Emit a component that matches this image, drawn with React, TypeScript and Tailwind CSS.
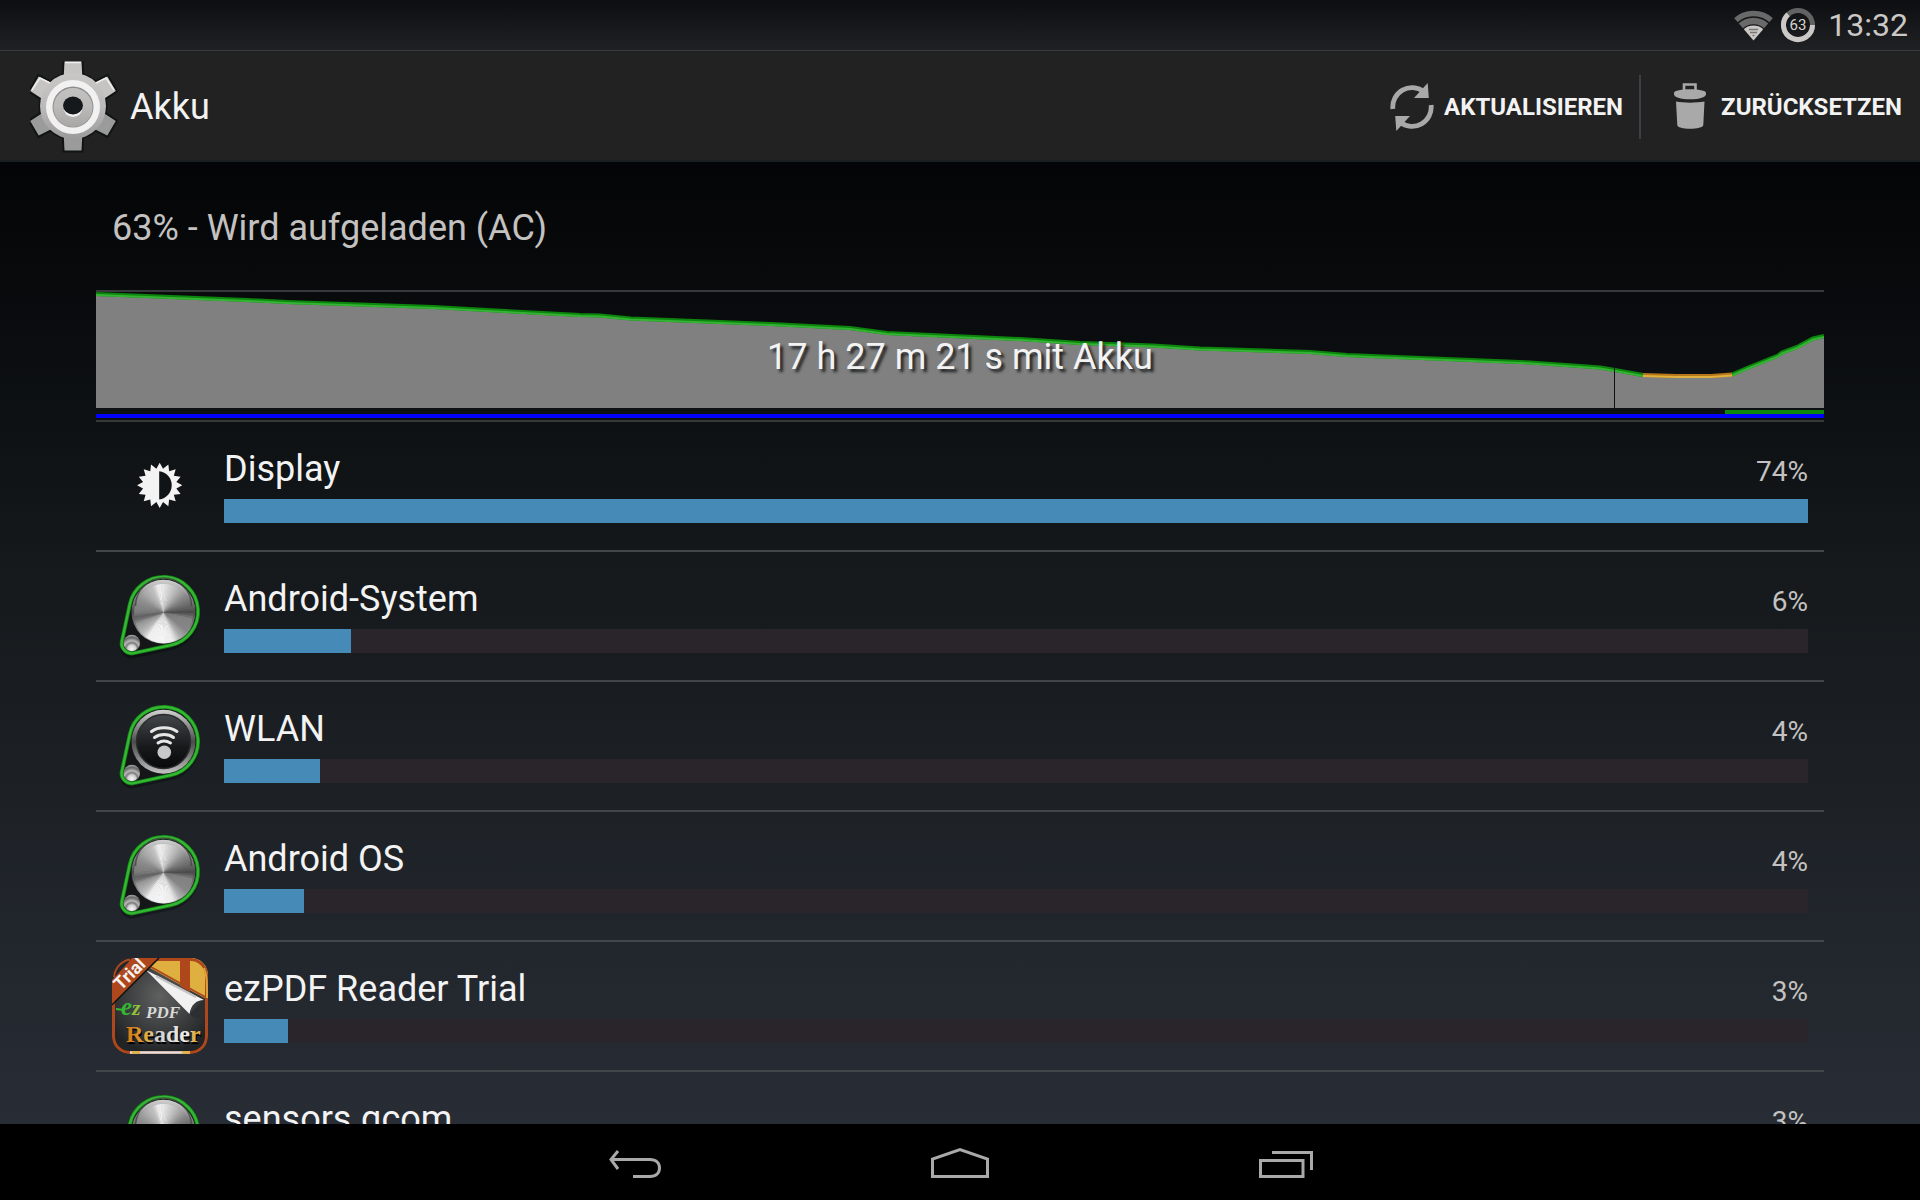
import { useState } from "react";

type IconKind = "display" | "knob" | "wifi" | "ezpdf";

interface Usage {
  name: string;
  percent: number;
  bar: number; // share of the track, in percent
  icon: IconKind;
}

const USAGE: Usage[] = [
  { name: "Display", percent: 74, bar: 100, icon: "display" },
  { name: "Android-System", percent: 6, bar: 8.02, icon: "knob" },
  { name: "WLAN", percent: 4, bar: 6.06, icon: "wifi" },
  { name: "Android OS", percent: 4, bar: 5.05, icon: "knob" },
  { name: "ezPDF Reader Trial", percent: 3, bar: 4.04, icon: "ezpdf" },
  { name: "sensors.qcom", percent: 3, bar: 3.6, icon: "knob" },
];

const polar = (cx: number, cy: number, r: number, deg: number) => {
  const a = (deg * Math.PI) / 180;
  return `${(cx + r * Math.cos(a)).toFixed(2)} ${(cy + r * Math.sin(a)).toFixed(2)}`;
};

// brushed metal: [angle clockwise from the top, grey value]
const METAL: [number, number][] = [
  [0, 225], [25, 185], [50, 135], [75, 95], [85, 75], [100, 130], [125, 135], [143, 175],
  [158, 235], [180, 245], [210, 240], [222, 190], [245, 150], [258, 95], [272, 125], [295, 140],
  [320, 175], [335, 195], [347, 240], [360, 225],
];

const metalAt = (deg: number) => {
  const i = METAL.findIndex(([a]) => a > deg);
  const [a0, v0] = METAL[i - 1];
  const [a1, v1] = METAL[i];
  return Math.round(v0 + ((v1 - v0) * (deg - a0)) / (a1 - a0));
};

const WEDGES = Array.from({ length: 72 }, (_, i) => i * 5);

function SettingsIcon() {
  return (
    <svg width="88" height="92" viewBox="0 0 88 92" aria-hidden="true">
      <defs>
        <linearGradient id="gear" x1="0" y1="0" x2="0" y2="92" gradientUnits="userSpaceOnUse">
          <stop offset="0" stopColor="#cfcdcb" />
          <stop offset="0.5" stopColor="#bcbab9" />
          <stop offset="1" stopColor="#8d8c8c" />
        </linearGradient>
      </defs>
      {[0, 60, 120, 180, 240, 300].map((a) => (
        <path key={a} d="M33 20 L34 0 H52 L53 20 Z" fill="#111415" stroke="#111415" strokeWidth="3" transform={`rotate(${a} 43 45)`} />
      ))}
      <circle cx="43" cy="45" r="34.5" fill="#111415" />
      {[60, 120, 180, 240, 300, 0].map((a) => (
        <path key={a} d="M33.5 20 L34.5 0.5 H51.5 L52.5 20 Z" fill={a > 90 && a < 270 ? "#9c9b9b" : "#c6c4c2"} transform={`rotate(${a} 43 45)`} />
      ))}
      <circle cx="43" cy="45" r="33" fill="url(#gear)" />
      <path d="M35 1.5 H51 M2 29 L10 17 L20 22 M66 22 L76 17 L84 29" stroke="#eeeeee" strokeWidth="1.5" fill="none" />
      <circle cx="43" cy="46" r="27" fill="#f1f1f1" />
      <circle cx="43" cy="46" r="20.5" fill="#8f8e8e" />
      <circle cx="43" cy="46.5" r="19.5" fill="url(#gear)" />
      <circle cx="43" cy="46.5" r="9.5" fill="#f1f1f1" />
      <ellipse cx="43" cy="44.5" rx="10" ry="9" fill="#16191b" />
    </svg>
  );
}

function WifiStatusIcon() {
  return (
    <svg width="41" height="31" viewBox="0 0 41 31" aria-hidden="true">
      <clipPath id="fan">
        <path d="M20.5 30.5 L-4 2 V-10 H45 V2 Z" />
      </clipPath>
      <g clipPath="url(#fan)" fill="none">
        <circle cx="20.5" cy="30.5" r="27" stroke="#696969" strokeWidth="5.5" />
        <circle cx="20.5" cy="30.5" r="19.5" stroke="#696969" strokeWidth="6.5" />
        <circle cx="20.5" cy="30.5" r="15" fill="#cbc8c6" />
        <path d="M16 19.5 H25 M17 22.5 H24 M19.5 25.5 H21.5" stroke="#777777" strokeWidth="1.6" />
      </g>
    </svg>
  );
}

function BatteryRing() {
  return (
    <svg width="36" height="36" viewBox="0 0 36 36" role="img" aria-label="63">
      <circle cx="18" cy="18" r="14.5" fill="none" stroke="#626262" strokeWidth="5" />
      <path d={`M${polar(18, 18, 14.5, 0)} A14.5 14.5 0 1 1 ${polar(18, 18, 14.5, 227)}`} fill="none" stroke="#cbc8c6" strokeWidth="5" />
      <text x="18" y="23" textAnchor="middle" fontSize="15" fill="#d6d4d2" className="font-[Roboto,sans-serif]">63</text>
    </svg>
  );
}

function RefreshIcon() {
  const half = (
    <>
      <path d="M2.9 26 A19.2 19.2 0 0 1 33.5 8.5" fill="none" stroke="#a9a9a9" strokeWidth="4.8" />
      <path d="M37.7 0 L38.8 15 L24 15 Z" fill="#a9a9a9" />
    </>
  );
  return (
    <svg width="44" height="48" viewBox="0 0 44 48" aria-hidden="true">
      {half}
      <g transform="rotate(180 22 24)">{half}</g>
    </svg>
  );
}

function TrashIcon() {
  return (
    <svg width="34" height="48" viewBox="0 0 34 48" aria-hidden="true">
      <path d="M11 9 V1.5 H22.5 V9" fill="none" stroke="#a9a9a9" strokeWidth="2.6" />
      <path d="M1 10 C1 7.5 9 6.3 17 6.3 C25 6.3 33 7.5 33 10 C34 14.5 26 16.3 17 16.3 C8 16.3 0 14.5 1 10 Z" fill="#a9a9a9" />
      <path d="M3 18.5 C11 20 23 20 31.5 18.5 L30.3 42 C30 44.6 24 45.8 17 45.8 C10 45.8 4.5 44.6 4.3 42 Z" fill="#a9a9a9" />
    </svg>
  );
}

function DisplayIcon() {
  const points = Array.from({ length: 32 }, (_, i) => polar(47.7, 47.3, i % 2 ? 17 : 22.6, i * 11.25 - 90)).join(" L");
  return (
    <svg width="96" height="96" viewBox="0 0 96 96" aria-hidden="true">
      <path d={`M${points} Z`} fill="#f3f3f3" />
      <path d="M47.2 33.2 A14.2 14.2 0 0 1 47.2 61.4 Z" fill="#111417" />
    </svg>
  );
}

function KnobIcon({ wifi = false }: { wifi?: boolean }) {
  return (
    <svg width="96" height="96" viewBox="0 0 96 96" aria-hidden="true">
      <defs>
        <linearGradient id="rim" x1="0" y1="0" x2="0" y2="1">
          <stop offset="0" stopColor="#d2d2d2" />
          <stop offset="0.3" stopColor="#828282" />
          <stop offset="0.5" stopColor="#4c4c4c" />
          <stop offset="0.7" stopColor="#777777" />
          <stop offset="1" stopColor="#c4c4c4" />
        </linearGradient>
        <linearGradient id="face" x1="0" y1="0" x2="0" y2="1">
          <stop offset="0" stopColor="#43474a" />
          <stop offset="0.6" stopColor="#17191b" />
          <stop offset="1" stopColor="#08090a" />
        </linearGradient>
        <radialGradient id="ball" cx="0.5" cy="0.85" r="0.8">
          <stop offset="0" stopColor="#f6f6f6" />
          <stop offset="0.3" stopColor="#d0d0d0" />
          <stop offset="0.45" stopColor="#7a7a7a" />
          <stop offset="0.6" stopColor="#b8b8b8" />
          <stop offset="0.85" stopColor="#666666" />
          <stop offset="1" stopColor="#999999" />
        </radialGradient>
      </defs>
      <path d="M17.8 40 A34.5 34.5 0 1 1 58.7 80.5 L21.8 88.6 A10 10 0 0 1 9.9 76 Z" fill="#000000" opacity="0.3" stroke="#000000" strokeWidth="3" />
      <path
        d="M17.8 36.3 A34.5 34.5 0 1 1 58.7 77.2 L21.8 85.1 A10 10 0 0 1 9.9 73.2 Z"
        fill="#141617"
        stroke="#118011"
        strokeWidth="4"
      />
      <path
        d="M17.8 36.3 A34.5 34.5 0 1 1 58.7 77.2 L21.8 85.1 A10 10 0 0 1 9.9 73.2 Z"
        fill="none"
        stroke="#34b834"
        strokeWidth="2.4"
      />
      <circle cx="51.5" cy="43.8" r="32" fill="url(#rim)" />
      {wifi ? (
        <>
          <circle cx="51.5" cy="43.5" r="27" fill="url(#face)" stroke="#2a2c2e" strokeWidth="1.5" />
          <g fill="none" stroke="#e6e6e6" strokeWidth="3" strokeLinecap="round">
            <path d="M39.5 33.5 C46 28.5 58 28.5 65 33.5" />
            <path d="M42.5 39.5 C48 35.5 56.5 35.5 61.5 39.5" />
            <path d="M46 45 C49.5 42.5 54.5 42.5 58.5 45" />
          </g>
          <circle cx="52.3" cy="54.3" r="6.8" fill="#c8c8c8" />
        </>
      ) : (
        <>
          {WEDGES.map((a) => {
            const v = metalAt(a);
            return (
              <path
                key={a}
                d={`M51.5 44.5 L${polar(51.5, 45.5, 29.5, a - 90)} A29.5 29.5 0 0 1 ${polar(51.5, 45.5, 29.5, a - 84)} Z`}
                fill={`rgb(${v},${v},${v})`}
              />
            );
          })}
          <path d="M23.5 38 A28 28 0 0 1 79.5 38" fill="none" stroke="#444444" strokeWidth="1.5" opacity="0.8" />
        </>
      )}
      <circle cx="19.8" cy="75" r="8.3" fill="url(#ball)" />
    </svg>
  );
}

function EzPdfIcon() {
  return (
    <svg width="96" height="96" viewBox="0 0 96 96" aria-hidden="true">
      <defs>
        <clipPath id="tile">
          <rect x="0" y="0" width="96" height="96" rx="17" />
        </clipPath>
        <radialGradient id="slate" cx="0.5" cy="0.4" r="0.6">
          <stop offset="0" stopColor="#606060" />
          <stop offset="1" stopColor="#212426" />
        </radialGradient>
        <linearGradient id="gold" x1="0" y1="1" x2="0.5" y2="0">
          <stop offset="0" stopColor="#a8741c" />
          <stop offset="0.5" stopColor="#dfb040" />
        </linearGradient>
        <linearGradient id="word" x1="0" y1="0" x2="1" y2="0">
          <stop offset="0.1" stopColor="#d8811c" />
          <stop offset="0.3" stopColor="#e3b044" />
          <stop offset="0.38" stopColor="#cfcfcf" />
          <stop offset="0.85" stopColor="#f0f0f0" />
          <stop offset="0.9" stopColor="#e3b044" />
        </linearGradient>
      </defs>
      <g clipPath="url(#tile)">
        <rect width="96" height="96" fill="url(#slate)" />
        <path d="M38 10 L46 0 H96 V42 Z" fill="url(#gold)" />
        <path d="M46 0 H68 V3 H44 Z" fill="#d6d6d6" />
        <path d="M68 0 H78 V34 L68 28 Z" fill="#ae481c" />
        <path d="M39 9 L95 40" stroke="#ae481c" strokeWidth="2" />
        <path d="M77.5 56 L92 42 V60 H82 Z" fill="#2b2f32" />
        <path d="M34 12 L92 42 C84 42 79 47 77.5 56 Z" fill="#f1f1f1" />
        <path d="M44 18 L84 39" stroke="#c4c4c4" strokeWidth="2" fill="none" />
        <rect x="1.5" y="1.5" width="93" height="93" rx="16" fill="none" stroke="#ae481c" strokeWidth="3" />
        <path d="M92 10 C95 18 95 22 95 40" stroke="#d9a33a" strokeWidth="2" fill="none" />
        <path d="M18 94.5 H78" stroke="#e0e0e0" strokeWidth="2.5" />
        <path d="M20 94.5 H28 M70 94.5 H78" stroke="#dfb040" strokeWidth="2.5" />
        <path d="M0 22 L20 0 H46 L0 46 Z" fill="#ae481c" />
        <path d="M0 22 V0 H20 Z" fill="#22272c" />
        <path d="M2 19 C3 10 9 3 18 1.5" stroke="#ae481c" strokeWidth="2" fill="none" />
        <path d="M0 47 L47 0" stroke="#111111" strokeWidth="1.5" />
      </g>
      <text x="9" y="33" transform="rotate(-45 9 33)" fontSize="18" fontWeight="700" fill="#f3f3f3" className="font-[Roboto,sans-serif]">Trial</text>
      <g fontStyle="italic" fontWeight="700" className="font-['Liberation_Serif',serif]">
        <text x="9" y="57" fontSize="25" fill="#34b834">e</text>
        <text x="20" y="57" fontSize="22" fill="#8fc23a">z</text>
        <text x="34" y="60" fontSize="17" fill="#d9d9d9">PDF</text>
      </g>
      <path d="M4 51 L12 52" stroke="#34b834" strokeWidth="2" />
      <text x="15" y="86" fontSize="24" fill="#000000" className="font-['Liberation_Serif',serif]" fontWeight="700">Reader</text>
      <text x="14" y="84" fontSize="24" fill="url(#word)" className="font-['Liberation_Serif',serif]" fontWeight="700">Reader</text>
    </svg>
  );
}

function UsageIcon({ kind }: { kind: IconKind }) {
  if (kind === "display") return <DisplayIcon />;
  if (kind === "ezpdf") return <EzPdfIcon />;
  return <KnobIcon wifi={kind === "wifi"} />;
}

const DISCHARGE =
  "0,2 151,8 191,10 337,15 417,19.5 484,23 504,23.5 535,26.5 624,30 675,32 754,36 791,41 924,47 984,51 1057,53.5 1104,56.5 1214,60 1251,63 1434,70.5 1484,74 1504,75.5 1519,78 1547,83";
const LOW = "1547,83 1580,84 1615,84 1636,82.5";
const CHARGE = "1636,82.5 1651,76 1682,63.5 1686,60.5 1701,55 1717,46.5 1728,44";

function BatteryChart() {
  return (
    <button className="relative block w-full border-y-2 border-[#36383b]" aria-label="Akkuverlauf">
      <svg className="block h-32 w-full" viewBox="0 0 1728 128" preserveAspectRatio="none" aria-hidden="true">
        <polygon points={`0,116 ${DISCHARGE} ${LOW} ${CHARGE} 1728,116`} fill="#808080" />
        <polyline points={DISCHARGE} fill="none" stroke="#0c860c" strokeWidth="4" />
        <polyline points={DISCHARGE} fill="none" stroke="#34b334" strokeWidth="2" transform="translate(0 1)" />
        <polyline points={CHARGE} fill="none" stroke="#0c860c" strokeWidth="4" />
        <polyline points={CHARGE} fill="none" stroke="#34b334" strokeWidth="2" transform="translate(0 1)" />
        <polyline points={LOW} fill="none" stroke="#b5761c" strokeWidth="4" />
        <polyline points={LOW} fill="none" stroke="#e2b03c" strokeWidth="2" transform="translate(0 1)" />
        <rect x="1518" y="76" width="1" height="40" fill="#0e0f11" />
        <rect x="1629" y="118" width="99" height="4" fill="#0c860c" />
        <rect x="0" y="122" width="1728" height="4" fill="#0000ff" />
      </svg>
      <span className="absolute inset-0 flex items-center justify-center pt-0.5 text-4xl text-[#f3f3f3] [text-shadow:3px_3px_3px_#1c1e20]">
        17 h 27 m 21 s mit Akku
      </span>
    </button>
  );
}

function UsageRow({ item }: { item: Usage }) {
  return (
    <li className="flex h-[130px] shrink-0 items-center gap-4 border-b-2 border-[#42464a] px-4">
      <UsageIcon kind={item.icon} />
      <div className="flex-1">
        <div className="flex items-baseline justify-between">
          <span className="text-4xl leading-10 text-[#f3f3f3]">{item.name}</span>
          <span className="text-[28px] leading-8 text-[#c4c2c0]">{item.percent}%</span>
        </div>
        <div className="mt-2.5 h-6 bg-[#29252b]">
          <div className="h-full bg-[#468ab7]" style={{ width: `${item.bar}%` }} />
        </div>
      </div>
    </li>
  );
}

export default function App() {
  const [usage, setUsage] = useState(USAGE);

  return (
    <div className="flex h-screen flex-col overflow-hidden bg-black font-[Roboto,sans-serif]">
      <div className="flex h-[50px] shrink-0 items-center justify-end bg-linear-to-b from-[#0d0e11] to-[#202123] pr-3">
        <WifiStatusIcon />
        <div className="ml-1.5">
          <BatteryRing />
        </div>
        <time className="ml-3 text-[32px] leading-10 text-[#cbc8c6]">13:32</time>
      </div>

      <header className="flex h-28 shrink-0 items-center border-t border-b-2 border-t-[#393943] border-b-[#1a1f22] bg-[#222222] pt-0.5 pr-[18px] pl-[30px]">
        <SettingsIcon />
        <h1 className="ml-3 flex-1 text-4xl text-[#f3f3f3]">Akku</h1>
        <button onClick={() => setUsage([...USAGE])} className="flex items-center gap-2.5 pr-4 text-2xl font-bold text-[#f3f3f3]">
          <RefreshIcon />
          AKTUALISIEREN
        </button>
        <div className="h-16 w-0.5 bg-[#3c3f43]" />
        <button onClick={() => setUsage([])} className="flex items-center gap-3.5 pl-8 text-2xl font-bold text-[#f3f3f3]">
          <TrashIcon />
          ZURÜCKSETZEN
        </button>
      </header>

      <main className="flex min-h-0 flex-1 flex-col overflow-hidden bg-linear-to-b from-[#040506] via-[#15191c] via-42% to-[#282d35] px-24">
        <h2 className="flex h-32 shrink-0 items-center px-4 pt-1 text-4xl text-[#c4c2c0]">63% - Wird aufgeladen (AC)</h2>
        <div className="shrink-0">
          <BatteryChart />
        </div>
        <ul className="flex flex-col">
          {usage.map((item) => (
            <UsageRow key={item.name} item={item} />
          ))}
        </ul>
      </main>

      <nav className="flex h-[76px] shrink-0 items-center justify-center gap-[265px] bg-black pt-1">
        <button aria-label="Zurück">
          <svg width="60" height="36" viewBox="0 0 60 36" fill="none" stroke="#a9a9a9" strokeWidth="3">
            <path d="M13 5 L6 13.5 L13 23" />
            <path d="M6 13.5 H45 C51 13.5 54.5 17 54.5 22 C54.5 27 51 30.5 45 30.5 H28" />
          </svg>
        </button>
        <button aria-label="Startseite">
          <svg width="60" height="36" viewBox="0 0 60 36" fill="none" stroke="#a9a9a9" strokeWidth="3">
            <path d="M2.5 30.5 V13 L30 3.5 L57.5 13 V30.5 Z" />
          </svg>
        </button>
        <button aria-label="Letzte Apps">
          <svg width="60" height="36" viewBox="0 0 60 36" fill="none" stroke="#a9a9a9" strokeWidth="3">
            <path d="M5.5 14.5 H48 V30.5 H5.5 Z" />
            <path d="M17 6.5 H56.5 V24" />
          </svg>
        </button>
      </nav>
    </div>
  );
}
